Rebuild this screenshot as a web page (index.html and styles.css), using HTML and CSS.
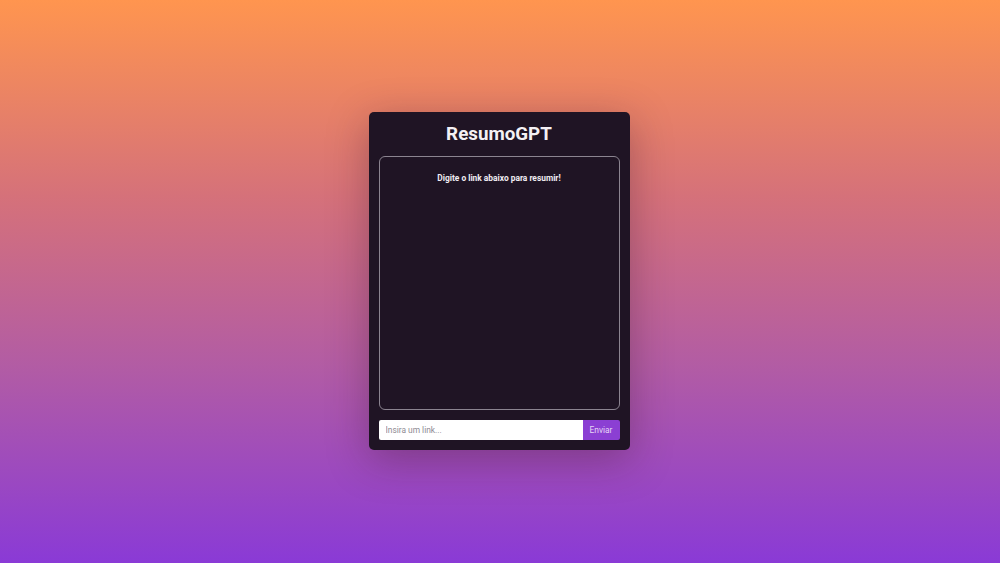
FILE: index.html
```html
<!DOCTYPE html>
<html lang="pt">
<head>
<meta charset="utf-8">
<title>ResumoGPT</title>
<link rel="stylesheet" href="styles.css">
</head>
<body>
<main class="page">
  <section class="card">
    <h1 class="title">ResumoGPT</h1>
    <div class="output">
      <p class="hint">Digite o link abaixo para resumir!</p>
    </div>
    <form class="form">
      <input class="input" type="text" placeholder="Insira um link...">
      <button class="button" type="button">Enviar</button>
    </form>
  </section>
</main>
</body>
</html>
```
FILE: styles.css
```css
* { box-sizing: border-box; }
html, body { margin: 0; height: 100%; }
body {
  font-family: Roboto, "Liberation Sans", sans-serif;
  background: linear-gradient(180deg, #ff954f 0%, #d5717a 35%, #b25ca4 65%, #8a3ad6 100%);
}
.page {
  height: 563px;
  display: flex;
  align-items: center;
  justify-content: center;
}
.card {
  width: 261px;
  height: 338px;
  margin: -1px 0 0 -2px;
  background: #1f1424;
  border-radius: 5px;
  box-shadow: 0 10px 40px rgba(60, 20, 40, 0.35);
  padding: 10px 10px 10px;
  display: flex;
  flex-direction: column;
}
.title {
  margin: 0;
  color: #f4f0f4;
  font-size: 18.8px;
  font-weight: 700;
  text-align: center;
  line-height: 24px;
  height: 34px;
}
.output {
  flex: 1;
  border: 1px solid #8b8490;
  border-radius: 6px;
  padding: 16px 10px;
}
.hint {
  margin: 0;
  color: #f0ecf2;
  font-size: 8.4px;
  font-weight: 700;
  text-align: center;
}
.form {
  display: flex;
  margin-top: 10px;
  height: 20px;
}
.input {
  flex: 1;
  border: none;
  border-radius: 2px 0 0 2px;
  background: #ffffff;
  font-family: Roboto, "Liberation Sans", sans-serif;
  font-size: 8.4px;
  padding: 0 7px;
  outline: none;
  color: #333;
}
.input::placeholder { color: #8e8a92; }
.button {
  width: 37px;
  border: none;
  border-radius: 0 2px 2px 0;
  background: #8b3fd3;
  color: #e6d6f5;
  font-family: Roboto, "Liberation Sans", sans-serif;
  font-size: 8.4px;
  padding: 0;
}
```
